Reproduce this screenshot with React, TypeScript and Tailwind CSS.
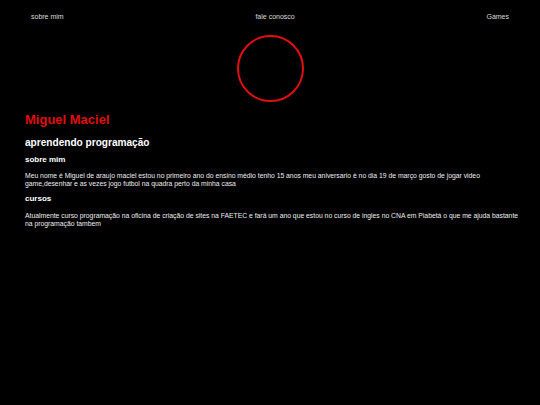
export default function App() {
  return (
    <div className="min-h-[405px] w-full bg-black text-white font-['Liberation_Sans',Arial,sans-serif]">
      {/* Top navigation */}
      <nav className="flex items-center justify-between px-[31px] pt-[13px] text-[7px] leading-[8px] text-[#dddddd]">
        <a href="#sobre">sobre mim</a>
        <a href="#contato">fale conosco</a>
        <a href="#games">Games</a>
      </nav>

      {/* Profile picture placeholder */}
      <div className="mt-[14px] flex justify-center">
        <div className="h-[67px] w-[67px] rounded-full border-[2px] border-[#e01010]" />
      </div>

      <main className="pl-[25px] pr-[10px] pt-[10px]">
        <h1 className="text-[13px] font-bold leading-[15px] text-[#e00d0d]">Miguel Maciel</h1>
        <h2 className="mt-[9px] text-[10.1px] font-bold leading-[13px]">aprendendo programação</h2>
        <h3 className="mt-[6px] text-[8px] font-bold leading-[10px]">sobre mim</h3>
        <p className="mt-[7px] max-w-[499px] text-[6.8px] leading-[7.5px] text-[#eeeeee]">
          Meu nome é Miguel de araujo maciel estou no primeiro ano do ensino médio tenho 15 anos meu aniversario é no dia 19 de março gosto de jogar video game,desenhar e as vezes jogo futbol na quadra perto da minha casa
        </p>
        <h3 className="mt-[7px] text-[8px] font-bold leading-[10px]">cursos</h3>
        <p className="mt-[8px] max-w-[499px] text-[6.8px] leading-[7.5px] text-[#eeeeee]">
          Atualmente curso programação na oficina de criação de sites na FAETEC e fará um ano que estou no curso de ingles no CNA em Piabetá o que me ajuda bastante na programação tambem
        </p>
      </main>
    </div>
  );
}
